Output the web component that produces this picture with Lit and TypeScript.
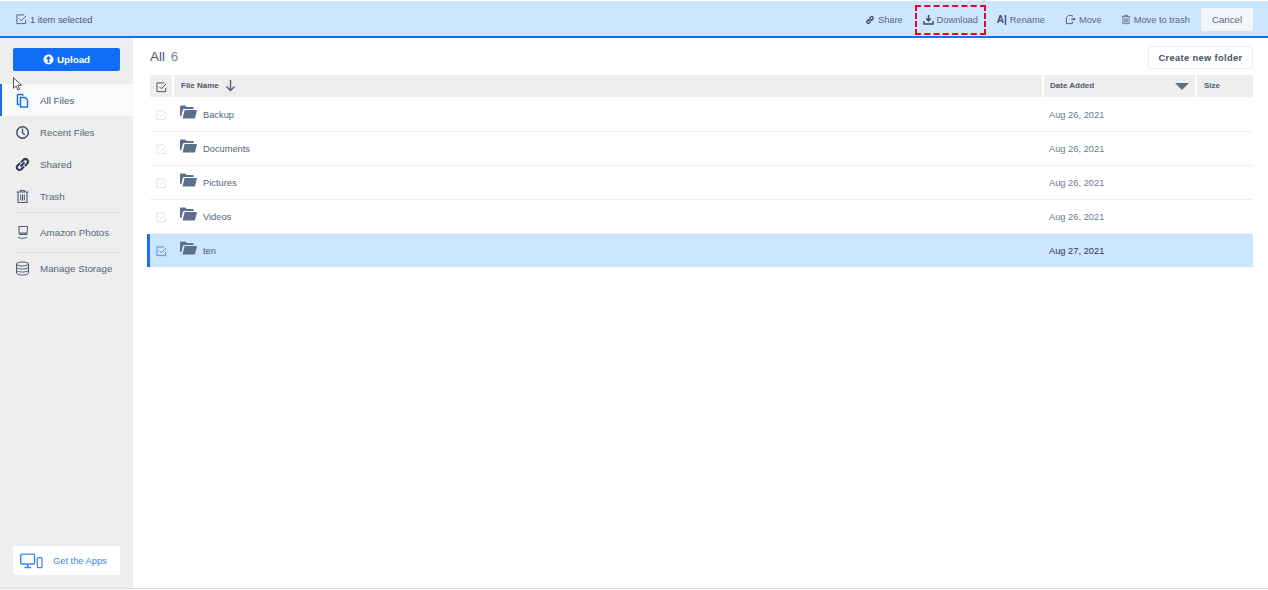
import { LitElement, html, css, svg } from "lit";
import { customElement } from "lit/decorators.js";

const check = html`<svg viewBox="0 0 12 12" width="11" height="11" fill="none" stroke="currentColor" stroke-width="1"><path d="M10.5 6.5v4h-9.5v-9.5h8"/><path d="M3.5 5l2.3 2.3 5.2-5.2" /></svg>`;
const folder = html`<svg viewBox="0 0 18 14" width="17" height="14"><path fill="#5d6f8c" d="M0 1.5C0 .7.5 0 1.3 0h4.2l1.6 1.8h6.4c.6 0 1 .4 1 1v1H4.6C3.7 3.8 3.3 4.2 3 5L1.4 11.5H1c-.6 0-1-.4-1-1z"/><path fill="#5d6f8c" d="M4.9 5h12c.7 0 1.1.6.9 1.2L16 13c-.1.5-.5.8-1 .8H2.7z"/></svg>`;

const nav = [
  ["All Files", svg`<path d="M2.5 1.5h5l1 1M2.5 1.5v10h2" stroke="#1a6ff0" fill="none" stroke-width="1.5"/><path d="M5.5 4.5h4.5l2.5 2.5v7h-7z" stroke="#1a6ff0" fill="none" stroke-width="1.5"/>`],
  ["Recent Files", svg`<circle cx="7.5" cy="7.5" r="5.8" fill="none" stroke="#3c4a63" stroke-width="1.4"/><path d="M7.5 3.8v4l2.3 2" fill="none" stroke="#3c4a63" stroke-width="1.3"/>`],
  ["Shared", svg`<path d="M6 5.2l2.6-2.5a2.6 2.6 0 013.7 3.7L10 9.2M9 9.8l-2.6 2.5a2.6 2.6 0 01-3.7-3.7L5 5.8M5.5 9.5l4-4" fill="none" stroke="#2f3d57" stroke-width="2.1"/>`],
  ["Trash", svg`<path d="M1.5 3h12M5.5 3V1.5h4V3M3 3.5v10h9v-10" fill="none" stroke="#4a5870" stroke-width="1.1"/><path d="M5.7 5.5v6M7.5 5.5v6M9.3 5.5v6" stroke="#4a5870" stroke-width="1"/>`],
  ["Amazon Photos", svg`<path d="M3.8 1.5h8.8l-.7 8h-7.6z" fill="none" stroke="#4a5870" stroke-width="1"/><path d="M4.2 8l7.6.2" stroke="#4a5870" stroke-width="1.2"/><path d="M3 12.3c2.8 1.4 6.2 1.4 9 0" fill="none" stroke="#4a5870" stroke-width=".9"/>`],
  ["Manage Storage", svg`<ellipse cx="7.5" cy="3" rx="6" ry="2" fill="none" stroke="#4a5870" stroke-width="1"/><path d="M1.5 3v9c0 1.1 2.7 2 6 2s6-.9 6-2V3M1.5 6c0 1.1 2.7 2 6 2s6-.9 6-2M1.5 9c0 1.1 2.7 2 6 2s6-.9 6-2" fill="none" stroke="#4a5870" stroke-width="1"/>`],
];

const rows = [
  ["Backup", "Aug 26, 2021", false],
  ["Documents", "Aug 26, 2021", false],
  ["Pictures", "Aug 26, 2021", false],
  ["Videos", "Aug 26, 2021", false],
  ["ten", "Aug 27, 2021", true],
] as const;

@customElement("app-root")
export class AppRoot extends LitElement {
  static styles = css`
    :host { display: block; position: relative; width: 1268px; height: 590px; font-family: "Liberation Sans", Arial, sans-serif; font-size: 9.3px; color: #4a5870; background: #fff; overflow: hidden; }
    * { box-sizing: border-box; }
    .cursor { position: absolute; left: 13px; top: 77px; width: 10px; height: 14px; }
    .page { display: flex; flex-direction: column; height: 589px; padding-top: 1px; border-bottom: 1px solid #d9d9d9; }
    .top { height: 37px; flex: none; background: #cbe6fd; border-bottom: 2px solid #1a6ff0; display: flex; align-items: center; padding: 2px 15px 0 16px; justify-content: space-between; }
    .sel { display: flex; align-items: center; gap: 3px; color: #4e5c74; }
    .sel svg { color: #4e5c74; }
    .actions { display: flex; align-items: center; }
    .act { display: flex; align-items: center; gap: 3px; color: #5a6880; white-space: nowrap; }
    .act svg { flex: none; }
    .share { margin-right: 12px; }
    .dl { width: 71px; height: 30px; border: 2px dashed #f0001c; justify-content: center; margin-right: 11px; }
    .ren { margin-right: 20px; }
    .ren b { font-size: 10px; color: #3c4a63; }
    .mov { margin-right: 19px; }
    .trash { margin-right: 11px; }
    .cancel { width: 52px; height: 23px; background: #f3f7fa; border-radius: 2px; display: flex; align-items: center; justify-content: center; color: #5a6880; font-size: 9.7px; }
    .body { flex: 1; display: flex; min-height: 0; }
    aside { width: 133px; flex: none; background: #eee; display: flex; flex-direction: column; padding-top: 10px; font-size: 9.8px; }
    .upload { margin: 0 13px; height: 23px; background: #0f6ef5; border-radius: 2px; color: #fff; font-weight: 700; display: flex; align-items: center; justify-content: center; gap: 3px; }
    .navlist { margin-top: 13px; display: flex; flex-direction: column; }
    .item { height: 32px; display: flex; align-items: center; padding-left: 15px; gap: 10px; color: #56637a; }
    .item svg { flex: none; }
    .item.active { background: #f8fafc; border-left: 2px solid #1a6ff0; padding-left: 13px; color: #4a5870; }
    .sep { height: 1px; background: #e0e0e0; margin: 0 13px; }
    .item.p1 { height: 39px; }
    .item.p2 { height: 31px; }
    .spacer { flex: 1; }
    .apps { margin: 0 13px 13px; height: 29px; background: #fff; border-radius: 3px; display: flex; align-items: center; padding-left: 7px; gap: 10px; color: #3a86f0; font-size: 9.3px; }
    main { flex: 1; min-width: 0; padding: 0 15px; display: flex; flex-direction: column; }
    .head { height: 37px; display: flex; align-items: center; justify-content: space-between; padding: 0 0 0 2px; }
    .title { font-size: 13.5px; color: #4a5870; }
    .title span { margin-left: 2px; color: #7a8699; }
    .create { width: 105px; height: 23px; border: 1px solid #eee; border-radius: 3px; background: #fff; font-weight: 700; font-size: 9.3px; letter-spacing: .35px; color: #454f63; display: flex; align-items: center; justify-content: center; margin-top: 2px; }
    .grid { display: flex; flex-direction: column; margin-left: 2px; }
    .thead { height: 22px; display: grid; grid-template-columns: 22px 868px 151px 56px; column-gap: 2px; }
    .thead > div { background: #eee; display: flex; align-items: center; font-size: 8px; font-weight: 700; color: #4e5a6f; padding: 0 0 1px 7px; position: relative; }
    .thead .c0 { justify-content: center; padding: 2px 0 0; color: #3c4a63; }
    .thead .c1 { gap: 6px; }
    .thead .c2 { padding-left: 6px; }
    .tri { position: absolute; right: 6px; top: 8px; width: 0; height: 0; border-left: 7px solid transparent; border-right: 7px solid transparent; border-top: 7px solid #666f7e; }
    .row { height: 34px; display: grid; grid-template-columns: 22px 868px 151px 56px; column-gap: 2px; align-items: center; border-bottom: 1px solid #eeeeee; color: #56637a; position: relative; }
    .thead + .row { height: 35px; padding-top: 1px; }
    .cb { display: flex; justify-content: center; color: #dbe0e6; padding-top: 2px; }
    .name { display: flex; align-items: center; gap: 6px; padding-left: 6px; }
    .name svg { margin-top: -5px; }
    .date { padding-left: 5px; color: #6c7a90; }
    .row.sel-row { background: #cbe6fd; border-bottom: none; height: 33px; color: #4a5870; }
    .row.sel-row::before { content: ""; position: absolute; left: -3px; top: 0; bottom: 0; width: 3px; background: #1a6ff0; }
    .row.sel-row .cb { color: #3a86f0; }
    .row.sel-row .date { color: #2f3a4e; }
  `;

  render() {
    return html`<div class="page">
      <div class="top">
        <div class="sel">${check}<span>1 item selected</span></div>
        <div class="actions">
          <div class="act share"><svg viewBox="0 0 12 12" width="10" height="10"><path d="M5 4l2-1.6a1.7 1.7 0 012.4 2.4L7.5 7M7 8L5 9.6A1.7 1.7 0 012.6 7.2L4.5 5M4.5 7.5l3-3" fill="none" stroke="#3f4d66" stroke-width="1.6"/></svg>Share</div>
          <div class="act dl"><svg viewBox="0 0 12 12" width="11" height="11"><path d="M6 1v6M3.5 4.8L6 7.4l2.5-2.6" fill="none" stroke="#3c4a63" stroke-width="1.6"/><path d="M1 8v3h10V8" fill="none" stroke="#3c4a63" stroke-width="1.6"/></svg>Download</div>
          <div class="act ren"><b>A|</b>Rename</div>
          <div class="act mov"><svg viewBox="0 0 12 12" width="11" height="11"><path d="M8 3V1.5H4L1.5 4v6.5H8V8" fill="none" stroke="#4c5a72"/><path d="M7 5.5h3.5" stroke="#4c5a72" stroke-width="1.4"/><path d="M9.5 3.7l2 1.8-2 1.8z" fill="#4c5a72"/></svg>Move</div>
          <div class="act trash"><svg viewBox="0 0 12 12" width="10" height="11"><path d="M1 2.5h10M4 2.5V1h4v1.5M2.3 3v8h7.4V3M4.6 4.5v5M6 4.5v5M7.4 4.5v5" fill="none" stroke="#5a6880"/></svg>Move to trash</div>
          <div class="cancel">Cancel</div>
        </div>
      </div>
      <div class="body">
        <aside>
          <div class="upload"><svg viewBox="0 0 12 12" width="11" height="11"><circle cx="6" cy="6" r="5.5" fill="#fff"/><path d="M6 2.3L3 5.5h2v4h2v-4h2z" fill="#0f6ef5"/></svg>Upload</div>
          <div class="navlist">
            ${nav.map((n, i) => html`
              ${i === 4 || i === 5 ? html`<div class="sep"></div>` : ""}
              <div class="item ${i === 0 ? "active" : ""} ${i === 4 ? "p1" : i === 5 ? "p2" : ""}">
                <svg viewBox="0 0 15 15" width="15" height="15">${n[1]}</svg><span>${n[0]}</span>
              </div>`)}
          </div>
          <div class="spacer"></div>
          <div class="apps">
            <svg viewBox="0 0 24 16" width="23" height="16"><rect x=".8" y=".8" width="14.4" height="10.4" rx="1" fill="none" stroke="#3a86f0" stroke-width="1.5"/><path d="M8 11.5v2.5M4.5 14.8h7" stroke="#3a86f0" stroke-width="1.6"/><rect x="18" y="4.5" width="5" height="10.5" rx="1" fill="none" stroke="#3a86f0" stroke-width="1.3"/></svg>
            <span>Get the Apps</span>
          </div>
        </aside>
        <main>
          <div class="head">
            <div class="title">All <span>6</span></div>
            <div class="create">Create new folder</div>
          </div>
          <div class="grid">
            <div class="thead">
              <div class="c0">${check}</div>
              <div class="c1">File Name <svg viewBox="0 0 12 14" width="11" height="13"><path d="M6 1v11.5M1.5 8L6 12.5 10.5 8" fill="none" stroke="#56637a" stroke-width="1.6"/></svg></div>
              <div class="c2">Date Added<span class="tri"></span></div>
              <div>Size</div>
            </div>
            ${rows.map((r) => html`<div class="row ${r[2] ? "sel-row" : ""}">
              <div class="cb">${check}</div>
              <div class="name">${folder}<span>${r[0]}</span></div>
              <div class="date">${r[1]}</div>
              <div></div>
            </div>`)}
          </div>
        </main>
      </div>
    </div>
    <svg class="cursor" viewBox="0 0 10 14"><path d="M.5.7v10.6l2.6-2.3 1.7 4 1.8-.8-1.7-3.9h3.5z" fill="#fff" stroke="#3b3f46" stroke-width=".9"/></svg>`;
  }
}
